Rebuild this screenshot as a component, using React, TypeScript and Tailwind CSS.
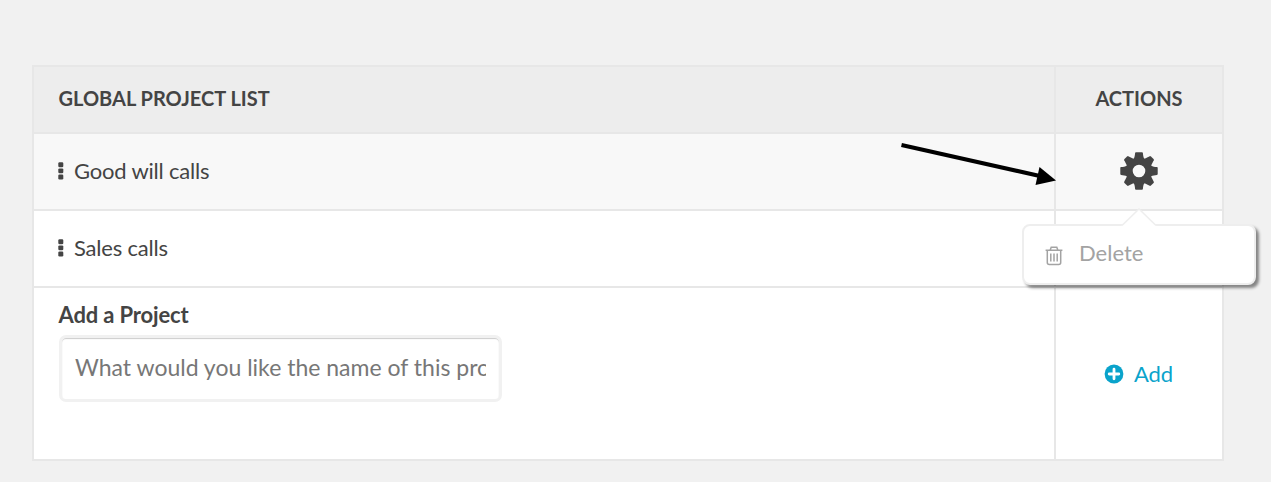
import type { ReactNode } from 'react';

const DIAGONALS = [45, 135, 225, 315];
const STRAIGHTS = [0, 90, 180, 270];

function GearIcon() {
  return (
    <svg width="38" height="38" viewBox="-19 -19 38 38" fill="#444444">
      <path
        fillRule="evenodd"
        d="M0-13.4A13.4 13.4 0 1 1 0 13.4A13.4 13.4 0 1 1 0-13.4ZM0-6.3A6.3 6.3 0 1 0 0 6.3A6.3 6.3 0 1 0 0-6.3Z"
      />
      {STRAIGHTS.map((angle) => (
        <path
          key={angle}
          transform={`rotate(${angle})`}
          d="M-5.2-12C-4.4-14-4.1-15.6-3.9-18Q-3.8-18.7-3-18.7H3Q3.8-18.7 3.9-18C4.1-15.6 4.4-14 5.2-12Z"
        />
      ))}
      {DIAGONALS.map((angle) => (
        <path
          key={angle}
          transform={`rotate(${angle})`}
          d="M-4.8-12L-2.9-18Q-2.6-18.7-1.9-18.7H1.9Q2.6-18.7 2.9-18L4.8-12Z"
        />
      ))}
    </svg>
  );
}

function TrashIcon() {
  return (
    <svg width="18" height="20" viewBox="0 0 18 20" fill="none" stroke="#a3a3a3" strokeWidth="1.5">
      <path d="M0.6 4.2H17.4M5.2 4L6.2 1.3H11.8L12.8 4" />
      <path d="M2.3 4.4V16.6Q2.3 18.6 4.3 18.6H13.7Q15.7 18.6 15.7 16.6V4.4" />
      <path d="M5.8 7.4V15.4M9 7.4V15.4M12.2 7.4V15.4" />
    </svg>
  );
}

function PlusIcon() {
  return (
    <svg width="20" height="20" viewBox="0 0 20 20">
      <circle cx="10" cy="10" r="9.4" fill="#0aa3cb" />
      <path d="M10 5.2V14.8M5.2 10H14.8" stroke="#fff" strokeWidth="2.8" strokeLinecap="round" />
    </svg>
  );
}

function DragHandle() {
  return (
    <svg width="6" height="18" viewBox="0 0 6 18" fill="#444444">
      <rect x="0.3" y="0.3" width="5" height="4.9" rx="1.2" />
      <rect x="0.3" y="6.4" width="5" height="4.9" rx="1.2" />
      <rect x="0.3" y="12.5" width="5" height="4.9" rx="1.2" />
    </svg>
  );
}

function Row({ className, children, action }: { className: string; children: ReactNode; action?: ReactNode }) {
  return (
    <div className={`flex border-b-2 border-[#e7e7e7] ${className}`}>
      <div className="w-[1022px] border-r-2 border-[#e7e7e7] pl-[24px]">{children}</div>
      <div className="flex-1 flex items-center justify-center">{action}</div>
    </div>
  );
}

function ActionMenu() {
  return (
    <div className="absolute left-[-34px] top-[90px] w-[234px] h-[61px] rounded-[8px] border-2 border-[#eeeeee] bg-white shadow-[3px_3px_3px_rgba(0,0,0,0.45)] flex items-center">
      <svg className="absolute left-[97px] top-[-18px]" width="36" height="19" viewBox="0 0 36 19">
        <path d="M0 19L1 17.5L18 1L35 17.5L36 19Z" fill="#fff" />
        <path d="M1 17.5L18 1L35 17.5" fill="none" stroke="#eeeeee" strokeWidth="1.5" />
      </svg>
      <span className="ml-[21px] mt-[2px]">
        <TrashIcon />
      </span>
      <span className="ml-[16px] mt-[-4px] text-[22px] leading-[28px] text-[#a3a3a3]">Delete</span>
    </div>
  );
}

export default function App() {
  return (
    <div className="w-[1271px] h-[482px] overflow-hidden bg-[#f1f1f1] pl-[32px] pt-[65px] font-['Lato',sans-serif] text-[#444444]">
      <div className="relative w-[1192px] border-2 border-b-0 border-[#e7e7e7] bg-white">
        {/* Table header */}
        <Row
          className="h-[67px] bg-[#ededed]"
          action={<span className="pb-[3px] text-[20px] leading-[26px] font-bold">ACTIONS</span>}
        >
          <div className="h-full flex items-center pb-[3px] pl-[0.5px] text-[20px] font-bold">GLOBAL PROJECT LIST</div>
        </Row>

        {/* Projects */}
        <Row
          className="h-[77px] bg-[#f8f8f8]"
          action={
            <div className="relative w-full h-full flex items-center justify-center pb-[2px]">
              <GearIcon />
              <div className="absolute z-10 left-0 top-0">
                <ActionMenu />
              </div>
            </div>
          }
        >
          <div className="h-full flex items-center gap-[10px] pb-[2px] text-[22px] tracking-[-0.2px]">
            <DragHandle />
            Good will calls
          </div>
        </Row>
        <Row className="h-[77px]">
          <div className="h-full flex items-center gap-[10px] pb-[2px] text-[22px] tracking-[-0.2px]">
            <DragHandle />
            Sales calls
          </div>
        </Row>

        {/* New project */}
        <Row
          className="h-[173px]"
          action={
            <button className="flex items-center gap-[10px] pr-px text-[22px] leading-[28px] tracking-[-0.1px] text-[#0aa3cb]">
              <PlusIcon />
              Add
            </button>
          }
        >
          <div className="pt-[13px] pl-[0.5px] text-[22px] leading-[28px] tracking-[-0.15px] font-bold">Add a Project</div>
          <div className="mt-[6px] ml-px w-[443px] h-[67px] rounded-[7px] border-[3px] border-[#f1f1f1] bg-white shadow-[inset_0_1px_1px_#cccccc]">
            <input
              className="block w-full h-full px-[13px] pb-[4px] text-[23px] outline-none placeholder:text-[#777777]"
              placeholder="What would you like the name of this project to be?"
            />
          </div>
        </Row>

        <svg className="absolute left-[860px] top-[70px]" width="170" height="56" viewBox="0 0 170 56">
          <path d="M7.5 8L148 39.5" stroke="#000" strokeWidth="4" />
          <path d="M145.5 30L162 43.5L141.5 48Z" fill="#000" />
        </svg>
      </div>
    </div>
  );
}
